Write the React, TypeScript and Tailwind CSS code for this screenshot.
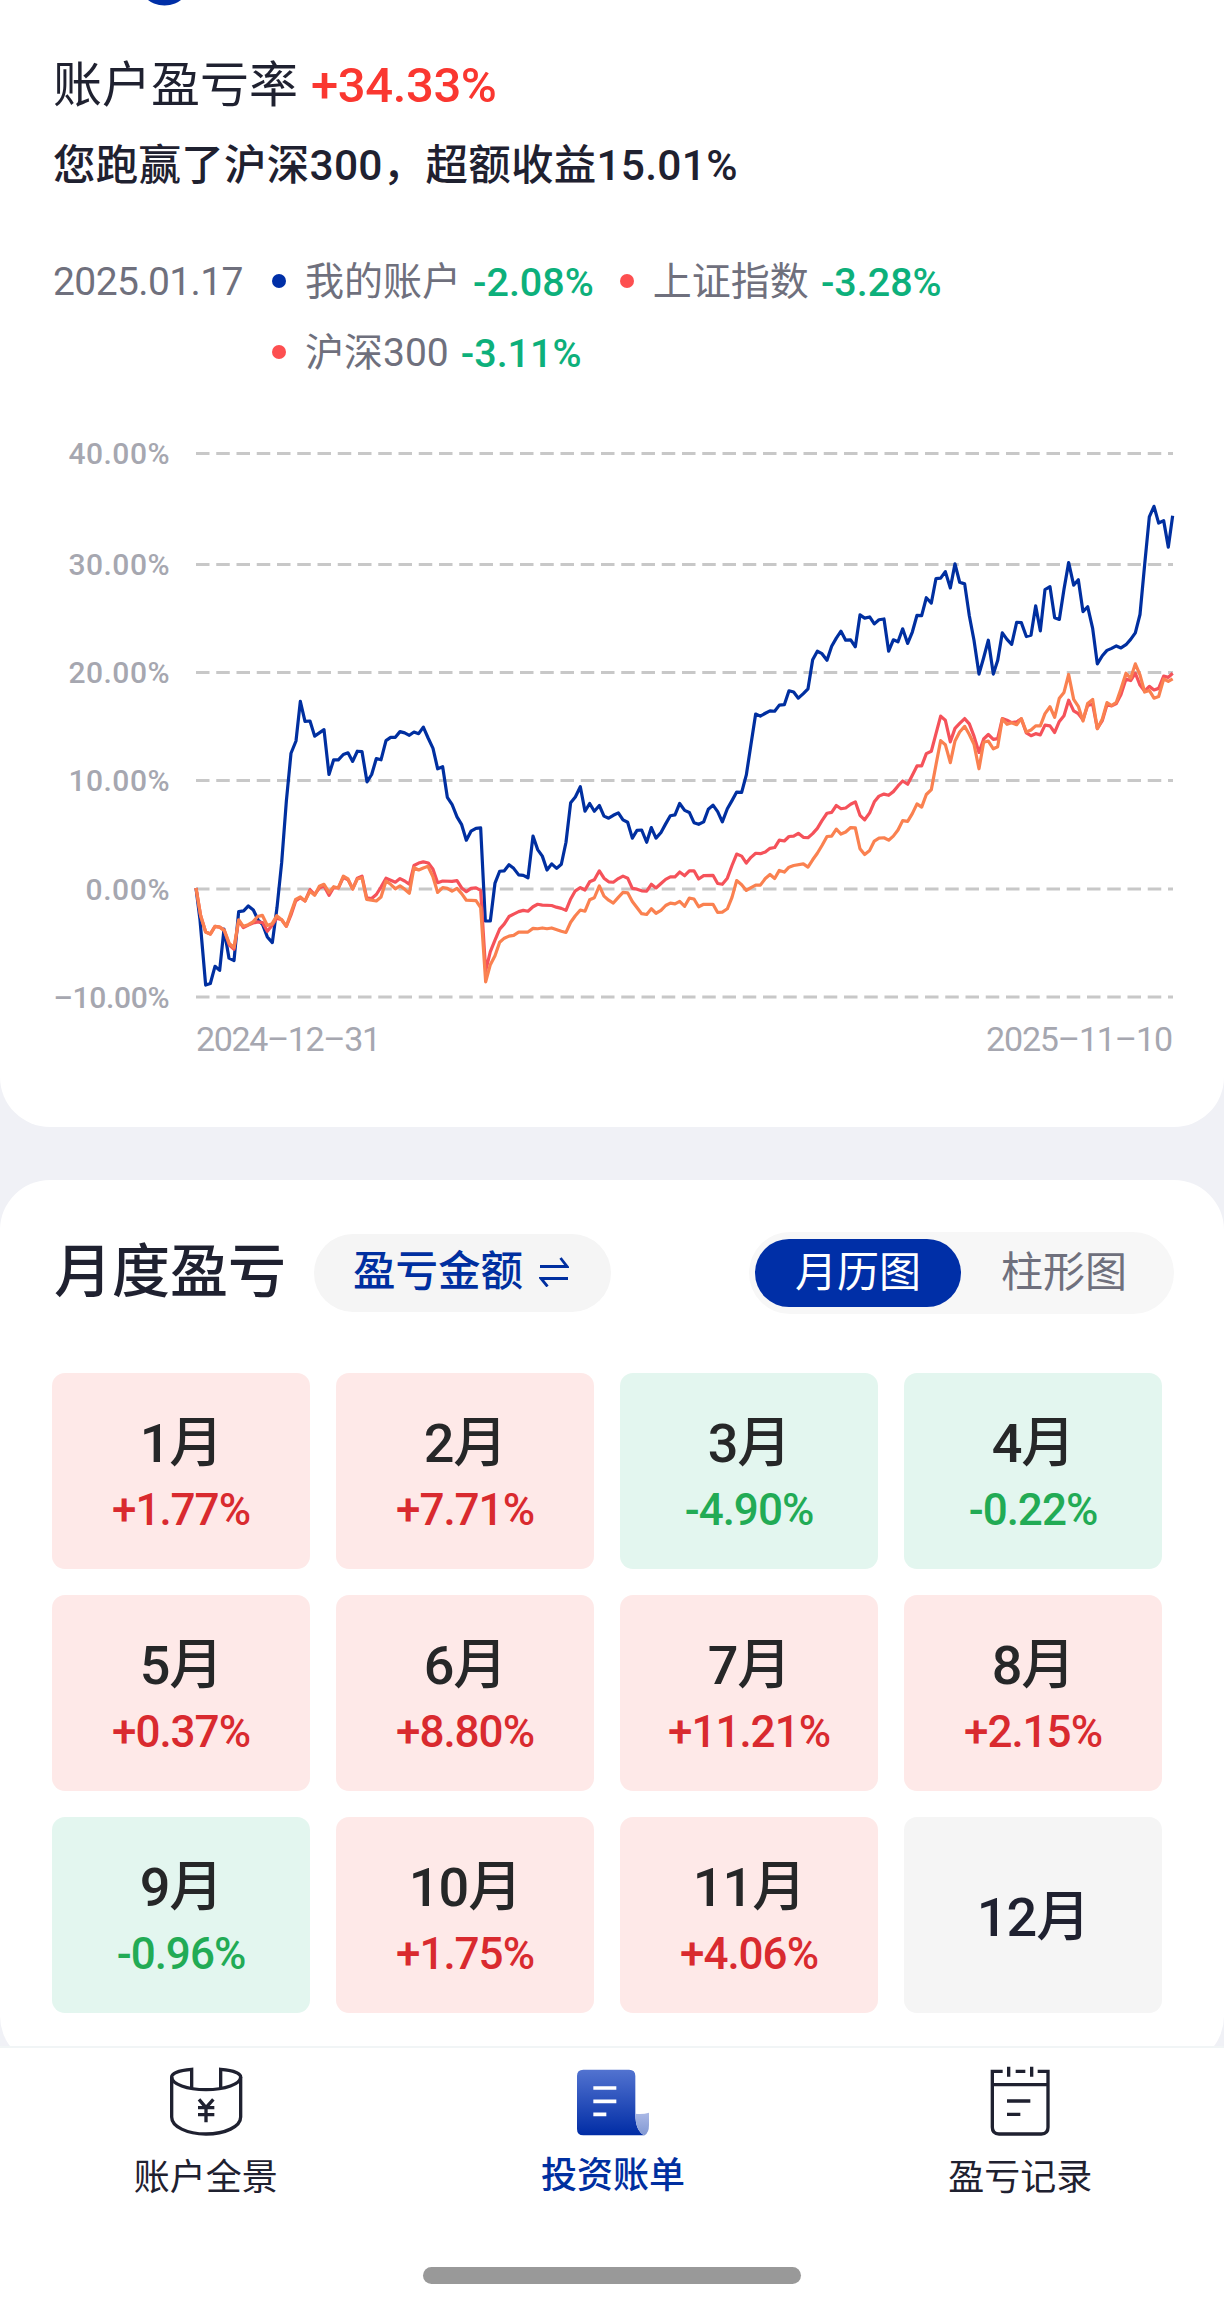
import React, { useState } from 'react';

// Series points in data units: 3 per px across, 2.45 per px down
const ACCOUNT =
  '0,1122 12,1200 29,1360 43,1356 57,1314 71,1324 84,1223 99,1294 114,1300 128,1180 143,1178 157,1166 172,1176 186,1200 200,1212 214,1242 229,1256 243,1170 257,1060 271,910 285,792 300,762 313,665 327,714 342,713 356,750 370,742 384,734 399,844 413,808 427,808 442,795 456,791 470,812 484,787 498,788 513,862 527,844 541,805 555,808 570,761 584,753 598,753 612,739 626,742 640,748 654,740 668,744 682,728 696,754 711,780 725,830 740,825 754,900 768,917 783,948 797,967 811,1005 825,983 840,976 854,975 868,1203 883,1203 897,1110 911,1081 925,1080 939,1065 953,1074 968,1090 982,1091 996,1097 1011,995 1025,1028 1039,1044 1053,1078 1067,1063 1082,1074 1096,1064 1110,1010 1124,913 1138,899 1153,874 1167,934 1181,915 1195,934 1210,920 1224,946 1238,951 1252,944 1267,938 1281,955 1295,961 1309,1000 1323,981 1337,980 1352,1010 1366,974 1380,1000 1395,986 1409,965 1423,945 1437,943 1451,915 1466,932 1480,937 1494,962 1508,966 1523,960 1537,929 1551,919 1565,935 1579,960 1594,928 1608,908 1622,887 1637,888 1651,845 1665,770 1679,696 1693,701 1708,694 1722,688 1736,689 1750,674 1765,673 1779,639 1793,642 1807,657 1822,646 1836,634 1850,563 1864,542 1878,548 1893,564 1907,530 1921,510 1935,493 1949,515 1964,514 1978,531 1992,453 2006,461 2021,458 2035,475 2049,465 2064,463 2078,542 2092,514 2106,519 2120,487 2135,523 2149,495 2163,454 2177,455 2191,411 2206,424 2220,364 2234,363 2248,347 2263,387 2277,328 2291,373 2306,377 2320,455 2334,515 2349,598 2363,558 2377,515 2392,598 2405,565 2419,497 2433,513 2447,525 2462,471 2476,472 2491,506 2505,503 2519,431 2533,492 2547,391 2562,384 2576,460 2590,464 2604,390 2618,325 2633,380 2647,367 2661,445 2675,433 2690,486 2704,573 2719,553 2733,540 2747,535 2761,529 2775,534 2790,526 2804,513 2818,497 2832,452 2846,330 2860,213 2874,187 2888,228 2903,222 2917,287 2930,210';

const SSE =
  '0,1122 14,1190 29,1230 43,1235 57,1216 71,1218 85,1226 100,1262 114,1272 128,1202 142,1219 157,1213 171,1208 185,1205 200,1207 214,1228 228,1214 242,1196 257,1200 271,1216 285,1188 299,1154 313,1146 327,1154 342,1126 356,1138 370,1122 384,1117 399,1140 413,1121 427,1122 442,1096 456,1102 470,1124 484,1098 498,1093 512,1146 527,1148 541,1138 555,1120 570,1098 584,1103 598,1108 612,1099 626,1105 640,1113 654,1067 668,1061 682,1058 697,1061 711,1076 725,1109 740,1105 768,1106 783,1104 797,1122 811,1131 825,1123 840,1122 854,1128 869,1325 883,1278 897,1250 911,1223 925,1210 939,1192 953,1186 968,1180 982,1177 996,1179 1011,1168 1025,1162 1039,1164 1067,1165 1081,1169 1096,1172 1110,1177 1124,1149 1138,1129 1153,1121 1167,1127 1181,1107 1195,1102 1210,1080 1224,1098 1238,1107 1252,1108 1267,1099 1281,1093 1295,1098 1309,1123 1323,1125 1337,1129 1352,1130 1366,1113 1380,1122 1395,1111 1409,1101 1423,1095 1437,1095 1451,1083 1466,1092 1480,1080 1494,1080 1508,1100 1523,1092 1551,1091 1565,1111 1579,1113 1594,1098 1608,1067 1622,1039 1637,1044 1651,1061 1665,1047 1679,1037 1693,1038 1708,1034 1722,1025 1736,1023 1750,1005 1765,1007 1779,996 1793,995 1807,988 1822,998 1836,999 1850,989 1864,976 1878,957 1893,939 1907,937 1921,920 1935,928 1949,926 1964,917 1978,911 1992,944 2006,955 2021,938 2035,911 2049,897 2064,892 2078,895 2092,886 2106,872 2120,860 2135,868 2149,846 2163,823 2177,823 2191,793 2206,787 2220,744 2234,701 2248,711 2263,764 2277,731 2291,719 2306,707 2320,720 2334,750 2349,790 2363,757 2377,746 2392,758 2405,756 2419,707 2433,711 2447,717 2462,715 2476,708 2491,742 2505,749 2519,744 2533,747 2547,723 2562,725 2576,741 2590,714 2604,700 2618,662 2633,688 2647,695 2661,710 2675,675 2690,672 2704,731 2719,712 2733,673 2747,676 2761,670 2775,648 2790,610 2804,614 2818,596 2832,625 2846,640 2860,628 2874,637 2888,633 2903,603 2917,606 2930,596';

const CSI300 =
  '0,1122 14,1190 29,1230 43,1235 57,1216 71,1218 85,1226 100,1258 114,1268 128,1200 142,1216 157,1212 171,1205 185,1192 199,1189 214,1214 228,1210 242,1190 257,1200 271,1216 285,1182 299,1150 313,1144 327,1154 342,1130 356,1140 370,1118 384,1113 399,1133 413,1119 427,1122 442,1093 456,1100 470,1125 484,1100 498,1097 512,1150 541,1154 555,1144 570,1105 584,1113 598,1124 612,1117 626,1125 640,1135 654,1072 668,1078 682,1073 696,1069 711,1095 725,1133 740,1121 754,1123 768,1130 783,1123 797,1136 811,1152 840,1153 854,1170 869,1352 883,1310 897,1288 911,1255 925,1245 939,1240 953,1238 968,1230 996,1230 1011,1221 1025,1222 1039,1220 1053,1222 1067,1220 1096,1228 1110,1231 1124,1206 1138,1190 1153,1176 1167,1179 1181,1151 1195,1146 1210,1117 1224,1142 1238,1152 1252,1159 1267,1145 1281,1133 1295,1134 1309,1155 1337,1185 1352,1187 1366,1173 1380,1184 1395,1177 1409,1165 1423,1159 1437,1161 1451,1155 1466,1167 1480,1147 1494,1149 1508,1168 1523,1162 1551,1162 1565,1182 1579,1181 1594,1173 1608,1145 1622,1104 1637,1114 1651,1128 1665,1121 1679,1115 1693,1115 1708,1099 1722,1089 1736,1099 1750,1079 1765,1083 1779,1071 1793,1067 1822,1063 1836,1071 1850,1053 1864,1037 1878,1018 1893,996 1907,995 1921,978 1935,990 1949,985 1964,974 1978,975 1992,1026 2006,1040 2021,1030 2035,1007 2049,1000 2064,999 2078,1005 2092,995 2106,980 2120,957 2135,959 2149,940 2163,916 2177,924 2191,893 2206,881 2220,820 2234,761 2248,771 2263,815 2277,762 2291,740 2306,726 2320,746 2334,770 2349,830 2363,765 2377,762 2392,781 2405,776 2419,708 2433,721 2447,717 2462,722 2476,707 2491,740 2505,735 2519,725 2533,725 2547,695 2562,678 2576,704 2590,657 2604,643 2618,599 2633,660 2647,677 2661,713 2675,670 2690,660 2704,732 2719,708 2733,668 2747,675 2761,667 2775,634 2790,596 2804,608 2818,573 2832,600 2846,642 2860,638 2874,657 2888,653 2903,610 2917,616 2930,610';

const SERIES = [
  { points: ACCOUNT, color: '#002fa0' },
  { points: SSE, color: '#f5525a' },
  { points: CSI300, color: '#fa8150' },
];

const GRID = [
  { label: '40.00%', y: 23.5, width: 101 },
  { label: '30.00%', y: 134.5, width: 101 },
  { label: '20.00%', y: 242.5, width: 101 },
  { label: '10.00%', y: 350.5, width: 101 },
  { label: '0.00%', y: 459, width: 84 },
  { label: '–10.00%', y: 567, width: 116 },
];

const MONTHS = [
  { name: '1月', rate: '+1.77%' },
  { name: '2月', rate: '+7.71%' },
  { name: '3月', rate: '-4.90%' },
  { name: '4月', rate: '-0.22%' },
  { name: '5月', rate: '+0.37%' },
  { name: '6月', rate: '+8.80%' },
  { name: '7月', rate: '+11.21%' },
  { name: '8月', rate: '+2.15%' },
  { name: '9月', rate: '-0.96%' },
  { name: '10月', rate: '+1.75%' },
  { name: '11月', rate: '+4.06%' },
  { name: '12月', rate: '' },
];

function ProfitChart() {
  return (
    <svg width="1224" height="640" viewBox="0 0 1224 640" className="block">
      {GRID.map((row) => (
        <g key={row.label}>
          <text x={169.5 - row.width} y={row.y + 10.5} textLength={row.width} fontSize="30" fontWeight="500" fill="#a6a7b0">
            {row.label}
          </text>
          <line x1="196" x2="1173" y1={row.y} y2={row.y} stroke="#c8c8c8" strokeWidth="3" strokeDasharray="13.5 6.75" />
        </g>
      ))}
      <g transform="translate(196 0) scale(0.33333 0.40816)" fill="none" strokeWidth="3.2" strokeLinejoin="round">
        {SERIES.map((s) => (
          <polyline key={s.color} points={s.points} stroke={s.color} vectorEffect="non-scaling-stroke" />
        ))}
      </g>
      <g fontSize="34" fill="#a6a7b0">
        <text x="196" y="621" textLength="185">2024–12–31</text>
        <text x="986" y="621" textLength="187">2025–11–10</text>
      </g>
    </svg>
  );
}

function LegendItem({ color, name, rate }: { color: string; name: string; rate: string }) {
  return (
    <div className="flex items-center">
      <span className={`h-[14px] w-[14px] rounded-full -mt-1 mr-[19px] ${color}`} />
      <span className="text-[39px]">{name}</span>
      <span className="ml-[12px] text-[39.5px] font-medium text-[#0db07b]">{rate}</span>
    </div>
  );
}

function PanoramaIcon() {
  return (
    <svg width="76" height="73" viewBox="499 256 228 219" fill="none" stroke="#1f2130" strokeWidth="10">
      <path d="M570 325V269C532 272 510 281 510 292V412C510 441 556 463 613 463S717 441 717 412V292C717 281 695 272 657 269V325" />
      <path d="M510 292C510 313 556 330 613 330S717 313 717 292" />
      <path d="M592 359L613 384L635 359M589 384H638M589 405H638M613 384V428" />
    </svg>
  );
}

function BillIcon() {
  return (
    <svg width="76" height="73" viewBox="227 256 228 219">
      <defs>
        <linearGradient id="bill" x1="0" y1="0" x2="0" y2="1">
          <stop offset="0" stopColor="#5273d0" />
          <stop offset="1" stopColor="#002ca5" />
        </linearGradient>
        <linearGradient id="curl" x1="0" y1="0" x2="0" y2="1">
          <stop offset="0" stopColor="#abb9e6" />
          <stop offset="1" stopColor="#8198d3" />
        </linearGradient>
      </defs>
      <path d="M252 270H389Q408 270 408 289V402Q408 455 436 467H252Q233 467 233 448V289Q233 270 252 270Z" fill="url(#bill)" />
      <path d="M408 402Q430 405 449 399V436Q449 459 436 467Q408 455 408 402Z" fill="url(#curl)" />
      <path d="M282 325H351M282 365H351M282 404H321" stroke="#fff" strokeWidth="11" />
    </svg>
  );
}

function RecordIcon() {
  return (
    <svg width="76" height="73" viewBox="550 256 228 219" fill="none" stroke="#1f2130" strokeWidth="10">
      <path d="M612 275H581V443Q581 463 601 463H728Q748 463 748 443V275H717M651 275H680M630 261V291M699 261V291M581 315H748" />
      <path d="M625 364H695M625 404H665" />
    </svg>
  );
}

function cardStyle(rate: string) {
  if (!rate) return 'bg-[#f5f5f5]';
  return rate.startsWith('+') ? 'bg-[#fee9e8]' : 'bg-[#e3f6ef]';
}

export default function App() {
  const [view, setView] = useState('月历图');

  return (
    <div className="h-[2303px] w-[1224px] overflow-hidden bg-[#f0f1f6] font-['Roboto','Noto_Sans_CJK_SC',sans-serif] text-[#1f2130]">
      <section className="h-[1127px] rounded-b-[50px] bg-white">
        <svg width="56" height="6" className="ml-[137px] block">
          <circle cx="27.5" cy="-22" r="27.5" fill="#002fa7" />
        </svg>
        <h1 className="mt-[49px] flex h-[60px] items-center pl-[53px] text-[49px] leading-none">
          账户盈亏率
          <span className="ml-[13px] text-[49px] font-medium tracking-[-0.4px] text-[#fa3730]">+34.33%</span>
        </h1>
        <p className="mt-[21px] flex h-[60px] items-center pl-[53px] text-[42.5px] font-medium leading-none tracking-[0.25px]">
          您跑赢了沪深300，超额收益15.01%
        </p>
        <div className="mt-[51px] flex h-[142px] pl-[53px] leading-none text-[#6f707d]">
          <span className="flex h-[71px] w-[219px] items-center text-[39px] tracking-[-0.6px]">2025.01.17</span>
          <div>
            <div className="flex h-[71px] items-center gap-[26px]">
              <LegendItem color="bg-[#002fa7]" name="我的账户" rate="-2.08%" />
              <LegendItem color="bg-[#fd4f50]" name="上证指数" rate="-3.28%" />
            </div>
            <div className="flex h-[71px] items-center">
              <LegendItem color="bg-[#fd4f50]" name="沪深300" rate="-3.11%" />
            </div>
          </div>
        </div>
        <div className="mt-[41px]">
          <ProfitChart />
        </div>
      </section>

      <section className="mt-[53px] h-[886px] rounded-[50px] bg-white pt-[52px]">
        <div className="flex h-[82px] items-center pl-[54px] pr-[50px]">
          <h2 className="-mt-[3px] text-[58px] font-medium leading-none">月度盈亏</h2>
          <button className="ml-[28px] flex h-[78px] w-[297px] items-center justify-center gap-[16px] rounded-full bg-[#f5f5f5] pb-[2px] pr-[3px] text-[42.5px] font-medium leading-none text-[#002fa0]">
            盈亏金额
            <svg width="30" height="30" viewBox="0 0 30 30" fill="none" stroke="#002fa0" strokeWidth="2.8">
              <path d="M1 9.5H28L21.5 1M29 21.5H2L8.5 29.5" />
            </svg>
          </button>
          <div className="ml-auto flex h-[82px] w-[425px] items-center rounded-full bg-[#f7f7f7] pl-[6px] leading-none">
            {['月历图', '柱形图'].map((tab) => (
              <button
                key={tab}
                onClick={() => setView(tab)}
                className={`h-[68px] w-[206px] rounded-full text-[42px] ${view === tab ? 'bg-[#002fa7] text-white' : 'text-[#6f707d]'}`}
              >
                {tab}
              </button>
            ))}
          </div>
        </div>
        <div className="mt-[59px] grid grid-cols-[repeat(4,258px)] gap-[26px] pl-[52px]">
          {MONTHS.map((month) => (
            <div
              key={month.name}
              className={`flex h-[196px] flex-col items-center justify-center rounded-[13px] pt-[6px] leading-none ${cardStyle(month.rate)}`}
            >
              <span className={`text-[54px] font-medium tracking-[-1px] ${month.rate ? 'text-[#262728]' : ''}`}>{month.name}</span>
              {month.rate && (
                <span
                  className={`mt-[17px] text-[44px] font-medium tracking-[-1px] ${month.rate.startsWith('+') ? 'text-[#d92a2f]' : 'text-[#22ab55]'}`}
                >
                  {month.rate}
                </span>
              )}
            </div>
          ))}
        </div>
      </section>

      <nav className="relative -mt-[20px] h-[257px] border-t-2 border-[#f1f5f6] bg-white">
        <div className="grid grid-cols-3 pl-[2px] pt-[17px] text-[36px] leading-none">
          <div className="flex flex-col items-center gap-[22px]">
            <PanoramaIcon />
            账户全景
          </div>
          <div className="flex flex-col items-center gap-[20px] font-medium text-[#002fa0]">
            <BillIcon />
            投资账单
          </div>
          <div className="flex flex-col items-center gap-[22px]">
            <RecordIcon />
            盈亏记录
          </div>
        </div>
        <div className="mx-auto mt-[71px] h-[17px] w-[378px] rounded-full bg-[#999]" />
      </nav>
    </div>
  );
}
